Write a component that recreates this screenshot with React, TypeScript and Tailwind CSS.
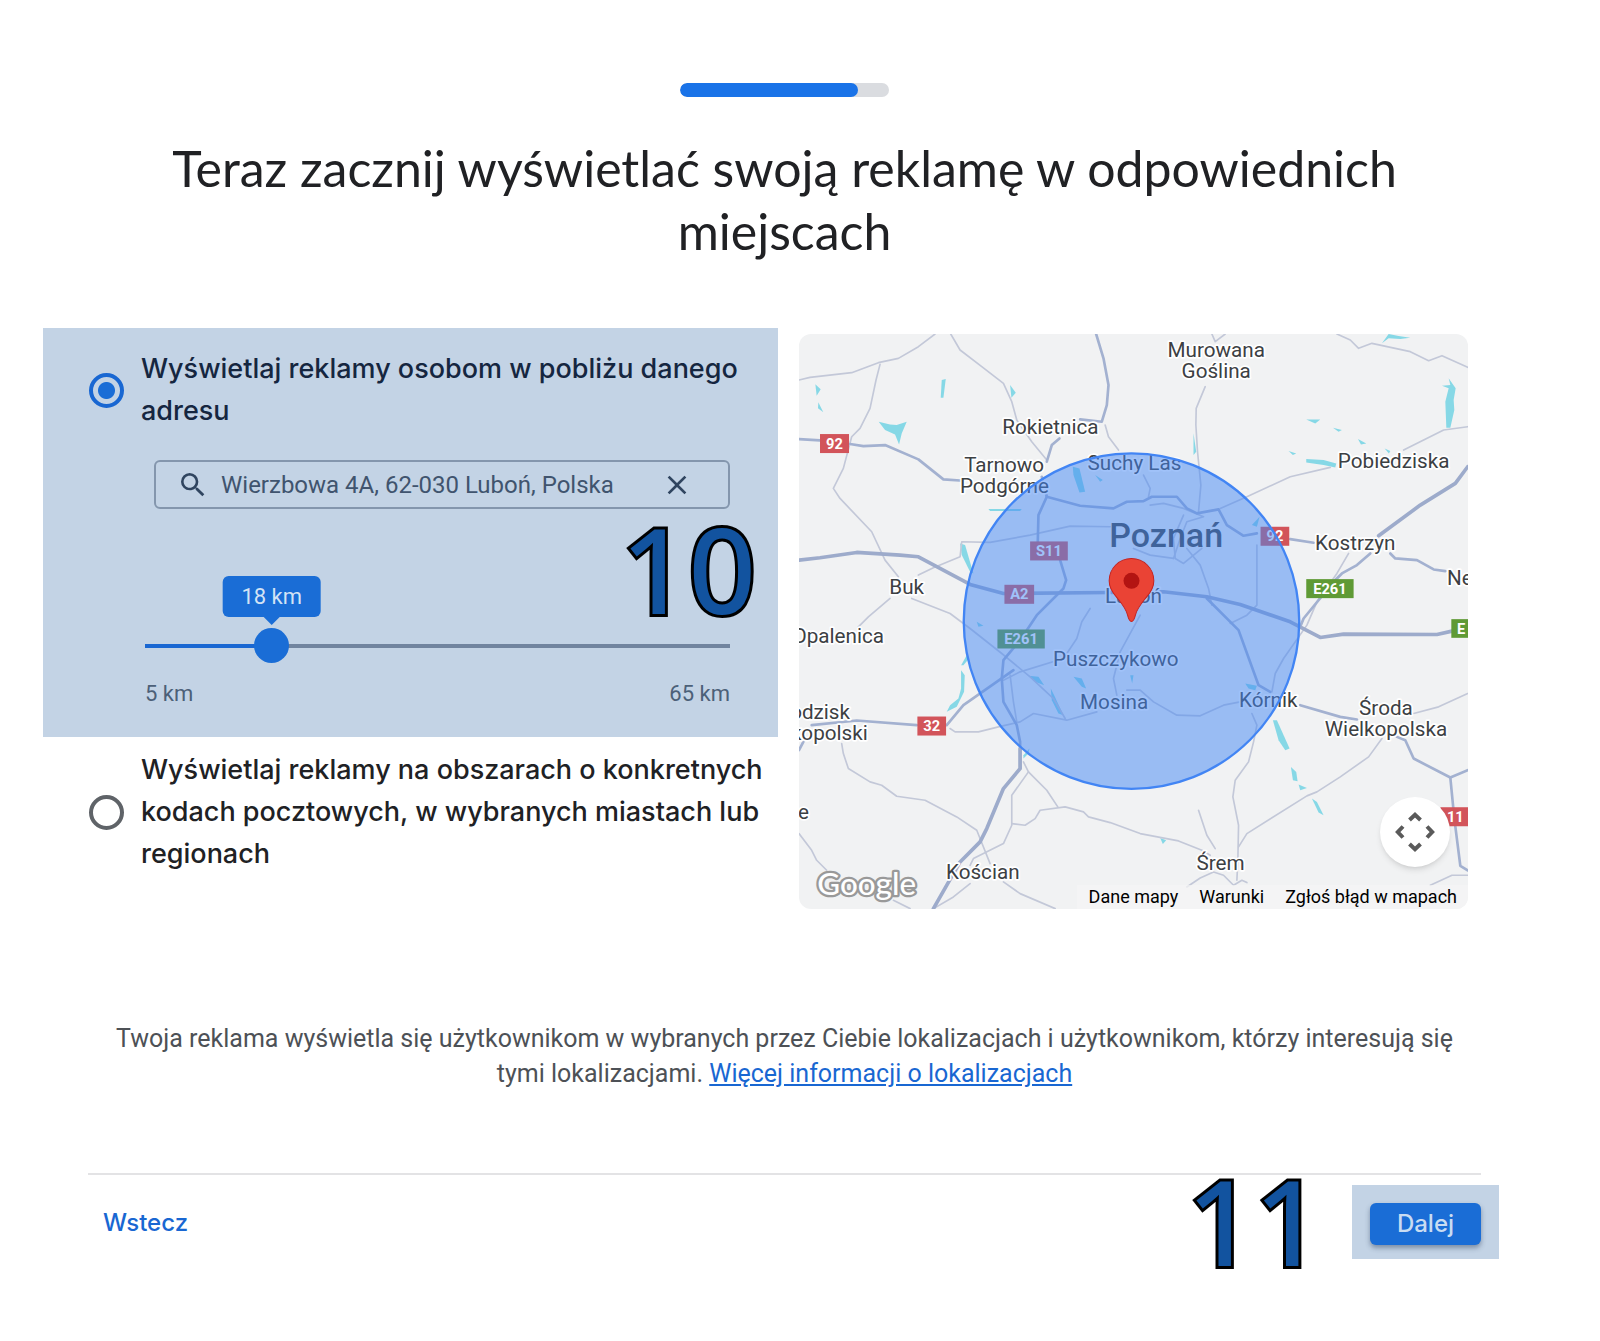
import { useState } from 'react';
import { MdClose, MdSearch } from 'react-icons/md';

const MIN_KM = 5;
const MAX_KM = 65;

const minorRoads = [
  '27,165 60,157 185,143 265,113 325,100 385,65 435,27',
  '270,118 258,165 240,250 210,310 185,335 160,430 130,490 150,520 245,620 285,705 325,755',
  '482,27 510,75 575,125 640,175 665,230 680,285 725,350 770,405',
  '945,300 955,335 985,375',
  '385,750 430,728 510,695 515,650 600,652 720,630 840,603 960,605',
  '365,820 480,865 540,910 635,985 720,1055 790,1120 825,1180',
  '300,820 235,875 205,905',
  '1245,185 1218,250 1217,300 1222,380 1232,480 1225,560',
  '1265,27 1275,50 1305,27',
  '1290,550 1370,515 1500,455 1620,427',
  '1840,375 1900,345 1960,315 2032,305',
  '1640,27 1680,45 1705,70 1745,55 1860,80 1915,107 1955,92 2032,127',
  '1675,685 1640,745 1580,830 1550,900 1480,1000 1455,1045 1445,1100',
  '480,1210 495,1220 565,1220 625,1205 690,1190 730,1165 830,1185 920,1160',
  '155,1255 160,1285 175,1330 240,1370 275,1380 320,1413 405,1425 500,1475 560,1515 600,1615',
  '27,1525 65,1575 80,1605 110,1635',
  '700,1310 715,1340 665,1410 665,1500 640,1555 550,1600 540,1620',
  '715,1340 770,1395 803,1445',
  '665,1495 705,1500 735,1480 750,1455 825,1445 880,1460 895,1475 960,1492 1050,1525 1165,1547 1235,1575 1260,1590',
  '640,1670 690,1705 795,1750',
  '540,1675 490,1715 430,1750',
  '310,1725 360,1750',
  '1775,1240 1735,1295 1650,1355 1580,1400 1550,1412 1370,1525 1345,1565',
  '1385,1165 1400,1200 1390,1250 1375,1310 1335,1365 1328,1415 1345,1500 1343,1600 1340,1665',
  '1870,1165 1945,1145 2032,1105',
  '1225,1455 1250,1530 1275,1570',
  '1190,1685 1230,1658 1270,1640 1300,1650 1330,1680 1355,1665 1370,1672',
  '1920,1680 1985,1650 2032,1650',
  '1010,1095 1050,1095 1090,1130 1160,1170 1230,1172 1300,1140 1350,1130',
  '1400,660 1400,840 1370,870 1320,895',
  '1190,670 1230,720 1255,790 1265,840',
  '1080,540 1120,535 1180,550 1240,575 1190,590 1170,640 1150,700',
  '1180,570 1150,640 1155,700 1180,715 1235,670',
  '1030,670 1080,690 1150,700',
  '900,850 875,890 860,940 820,1000 690,1040 640,1065',
  '1050,870 990,980 970,1060 980,1110',
  '660,1050 670,1130 680,1190',
  '1060,450 1080,490 1075,515',
];

const mainRoads = [
  '27,342 90,346',
  '180,357 220,363 285,360 385,403 460,463 520,467',
  '918,27 940,100 955,180 950,240 935,290 870,283',
  '808,340 785,360 770,410',
  '755,455 770,515 745,570 743,650',
  '810,705 828,765 820,790 740,870 690,945 640,1005 635,1060 640,1130 680,1200 690,1250 690,1330',
  '770,515 870,542 970,550 1010,530 1060,528 1085,515 1160,515 1190,550 1220,565 1285,553 1310,600 1360,632 1400,625',
  '1500,642 1570,653',
  '1740,685 1700,720 1655,745 1630,770 1540,880 1530,905',
  '1800,685 1815,700 1880,705 1930,733 1965,738',
  '65,1200 200,1186 380,1200',
  '470,1200 520,1140 670,1035',
  '27,1275 40,1250',
  '1250,820 1345,915 1405,1080 1440,1100',
  '1530,1140 1650,1175 1700,1183',
  '1820,1235 1845,1245 1870,1300 1980,1357 2032,1335',
  '1980,1357 1992,1480 2010,1622 2032,1635',
];

const motorways = [
  '27,705 90,698 200,682 330,690 385,695 540,778 640,805 960,802 1120,800 1250,815 1350,838 1500,890 1590,937 1660,927 1940,928 1985,918',
  '2032,425 1995,475 1890,540 1765,632',
  '690,1270 690,1330 640,1390 590,1510 570,1550 510,1610 430,1750',
];

const lakes = [
  '76,178 92,193 80,212',
  '85,232 100,262 84,250',
  '455,165 467,162 460,218 452,218',
  '660,180 677,203 664,218',
  '266,290 300,298 320,300 350,290 335,325 327,358 315,328 285,315',
  '848,425 868,430 885,500 868,502 850,450',
  '915,450 938,465 930,470',
  '595,552 695,552 690,558 600,558',
  '510,655 525,660 550,745 540,740 515,690',
  '530,990 537,1000 520,1020 513,1020',
  '513,1035 524,1050 522,1100 500,1145 470,1160 480,1140 505,1120 513,1090',
  '1210,325 1218,380 1210,390',
  '1775,55 1795,27 1825,33 1860,38 1830,42 1795,40',
  '1975,160 1996,190 1990,225 1992,255 1980,308 1968,308 1965,230 1975,190 1955,182 1980,180',
  '1548,283 1590,283 1575,295',
  '1628,308 1655,315 1645,320',
  '1703,342 1728,355 1712,358',
  '1783,370 1800,378 1796,385',
  '1495,378 1518,385 1508,390',
  '1548,402 1600,405 1638,415 1635,427 1600,420 1548,412',
  '1385,600 1408,575 1400,605',
  '1448,1185 1460,1185 1498,1270 1485,1275 1465,1245',
  '1502,1325 1518,1340 1522,1368 1508,1365',
  '1525,1378 1550,1388 1530,1395',
  '1565,1420 1580,1430 1600,1470 1585,1462',
  '1365,1075 1400,1082 1395,1095 1375,1090',
  '715,1052 745,1055 762,1080 735,1070',
  '782,1090 792,1110 820,1170 805,1165 785,1125',
  '850,1055 875,1060 888,1090 875,1085',
  '718,1270 715,1285 700,1300 700,1290',
  '1110,1538 1128,1545 1118,1556',
  '560,890 580,902 565,905',
  '1020,1050 1030,1050 1026,1075',
];

const places = [
  { name: 'Murowana', x: 1278, y: 95 },
  { name: 'Goślina', x: 1278, y: 158 },
  { name: 'Rokietnica', x: 781, y: 327 },
  { name: 'Tarnowo', x: 642, y: 442 },
  { name: 'Podgórne', x: 643, y: 505 },
  { name: 'Suchy Las', x: 1033, y: 434 },
  { name: 'Pobiedziska', x: 1810, y: 428 },
  { name: 'Kostrzyn', x: 1695, y: 675 },
  { name: 'Buk', x: 350, y: 808 },
  { name: 'Luboń', x: 1030, y: 835 },
  { name: 'Puszczykowo', x: 977, y: 1023 },
  { name: 'Mosina', x: 972, y: 1150 },
  { name: 'Kórnik', x: 1434, y: 1145 },
  { name: 'Środa', x: 1787, y: 1168 },
  { name: 'Wielkopolska', x: 1787, y: 1232 },
  { name: 'Kościan', x: 578, y: 1660 },
  { name: 'Śrem', x: 1291, y: 1635 },
];

const clippedPlaces = [
  { name: 'Opalenica', x: 282, y: 954 },
  { name: 'odzisk', x: 180, y: 1180 },
  { name: 'kopolski', x: 233, y: 1245 },
  { name: 'e', x: 57, y: 1480 },
];

const shields = [
  { label: '92', x: 90, y: 327, w: 87, color: '#d2545a' },
  { label: '92', x: 1411, y: 605, w: 86, color: '#d2545a' },
  { label: 'S11', x: 720, y: 649, w: 113, color: '#d2545a' },
  { label: 'A2', x: 643, y: 779, w: 89, color: '#d2545a' },
  { label: '32', x: 382, y: 1174, w: 86, color: '#d2545a' },
  { label: '11', x: 1950, y: 1446, w: 90, color: '#d2545a' },
  { label: 'E261', x: 1548, y: 762, w: 142, color: '#5f9a35' },
  { label: 'E261', x: 622, y: 913, w: 142, color: '#5f9a35' },
];

function CoverageMap() {
  return (
    <svg viewBox="27 27 2006 1724" className="block w-full font-[Roboto,sans-serif]" role="img" aria-label="Poznań">
      <rect x="27" y="27" width="2006" height="1724" fill="#f1f2f3" />
      <g fill="#86d8e6">
        {lakes.map((points) => (
          <polygon key={points} points={points} />
        ))}
      </g>
      <g fill="none" strokeLinejoin="round" strokeLinecap="round">
        <g stroke="#c3c8d8" strokeWidth="5">
          {minorRoads.map((points) => (
            <polyline key={points} points={points} />
          ))}
        </g>
        <g stroke="#a3b1d0" strokeWidth="8">
          {mainRoads.map((points) => (
            <polyline key={points} points={points} />
          ))}
        </g>
        <g stroke="#9dabcb" strokeWidth="11">
          {motorways.map((points) => (
            <polyline key={points} points={points} />
          ))}
        </g>
      </g>

      {/* Road shields */}
      {shields.map((s) => (
        <g key={`${s.label}-${s.x}`}>
          <rect x={s.x} y={s.y} width={s.w} height="57" fill={s.color} />
          <text x={s.x + s.w / 2} y={s.y + 44} textAnchor="middle" fontSize="44" fontWeight="700" fill="#fff">
            {s.label}
          </text>
        </g>
      ))}
      <rect x="1983" y="882" width="60" height="56" fill="#5f9a35" />
      <text x="2000" y="926" fontSize="44" fontWeight="700" fill="#fff">E</text>

      {/* Place names */}
      <g fontSize="62" fill="#3c4043" stroke="#fff" strokeWidth="10" strokeLinejoin="round" paintOrder="stroke">
        {places.map((p) => (
          <text key={p.name} x={p.x} y={p.y} textAnchor="middle">{p.name}</text>
        ))}
        {clippedPlaces.map((p) => (
          <text key={p.name} x={p.x} y={p.y} textAnchor="end">{p.name}</text>
        ))}
        <text x="1970" y="780">Ne</text>
        <text x="1128" y="665" textAnchor="middle" fontSize="102" fontWeight="500" stroke="none">Poznań</text>
      </g>

      <circle cx="1024" cy="888" r="503" fill="#4285f4" fillOpacity="0.5" stroke="#4285f4" strokeWidth="7" />

      {/* Pin */}
      <path
        d="M1024 889c-6 0-9-8-12-20-6-22-20-37-33-53-13-15-22-28-22-49a67 67 0 0 1 134 0c0 21-9 34-22 49-13 16-27 31-33 53-3 12-6 20-12 20z"
        fill="#ea4335"
        stroke="#c5221f"
        strokeWidth="3"
      />
      <circle cx="1024" cy="767" r="24" fill="#b31412" />

      <text
        x="230"
        y="1708"
        textAnchor="middle"
        fontSize="94"
        fontFamily="Lato, sans-serif"
        fontWeight="500"
        fill="#fff"
        stroke="#999"
        strokeWidth="14"
        strokeLinejoin="round"
        paintOrder="stroke"
      >
        Google
      </text>
    </svg>
  );
}

function StepMarker({ children }: { children: string }) {
  return (
    <span className="font-['Noto_Sans',sans-serif] text-[118px] leading-[92px] font-medium text-[#12539f] [stroke-linejoin:round] [-webkit-text-stroke:6px_#000] [paint-order:stroke]">
      {children}
    </span>
  );
}

export default function App() {
  const [target, setTarget] = useState('address');
  const [address, setAddress] = useState('Wierzbowa 4A, 62-030 Luboń, Polska');
  const [radius, setRadius] = useState(18);
  const percent = ((radius - MIN_KM) / (MAX_KM - MIN_KM)) * 100;

  return (
    <main className="min-h-screen bg-white pt-[83px] pr-[119px] pb-20 pl-[88px] font-[Roboto,sans-serif] text-[#202124]">
      {/* Progress */}
      <div className="mx-auto h-[14px] w-[209px] overflow-hidden rounded-full bg-[#dadce0]">
        <div className="h-full w-[85%] rounded-full bg-[#1a73e8]" />
      </div>

      <h1 className="mt-10 px-16 text-center font-[Lato,sans-serif] text-[50px] leading-[63px]">
        Teraz zacznij wyświetlać swoją reklamę w odpowiednich miejscach
      </h1>

      <div className="mt-[65px] -ml-[45px] flex items-start gap-[21px] pr-[13px]">
        <div className="flex-[735]">
          {/* Address targeting */}
          <section className="relative bg-[#c3d3e5] pt-5 pr-4 pb-7 pl-[46px]">
            <div className="flex items-center gap-[17px]">
              <input
                id="target-address"
                type="radio"
                name="target"
                checked={target === 'address'}
                onChange={() => setTarget('address')}
                className="h-[35px] w-[35px] shrink-0 appearance-none rounded-full border-4 border-[#5f6368] checked:border-[#1967d2] checked:bg-[radial-gradient(circle,#1a6dd6_8px,transparent_9px)]"
              />
              <label
                htmlFor="target-address"
                className="font-[Inter,sans-serif] text-[27px] leading-[42px] font-medium text-[#152640]"
              >
                Wyświetlaj reklamy osobom w pobliżu danego adresu
              </label>
            </div>

            <div className="mt-7 mr-8 ml-[65px] flex h-[49px] items-center rounded-md border-2 border-[#8496ad] pl-[21px] text-[#304560]">
              <MdSearch className="h-8 w-8 shrink-0 stroke-current" />
              <input
                type="text"
                aria-label="Adres"
                value={address}
                onChange={(e) => setAddress(e.target.value)}
                className="ml-3 w-full min-w-0 bg-transparent text-[24px] text-[#40546e] outline-none"
              />
              <button type="button" aria-label="Wyczyść" className="mr-[35px] shrink-0" onClick={() => setAddress('')}>
                <MdClose className="h-8 w-8" />
              </button>
            </div>

            <div className="mt-[119px] mr-8 ml-14">
              <div className="relative flex h-[35px] items-center">
                <div className="h-1 w-full bg-[#71849f]">
                  <div className="h-full bg-[#1967d2]" style={{ width: `${percent}%` }} />
                </div>
                <input
                  type="range"
                  aria-label="Promień"
                  min={MIN_KM}
                  max={MAX_KM}
                  value={radius}
                  onChange={(e) => setRadius(Number(e.target.value))}
                  className="absolute top-0 -left-[18px] h-[35px] w-[calc(100%+34px)] appearance-none bg-transparent [&::-webkit-slider-thumb]:h-[35px] [&::-webkit-slider-thumb]:w-[35px] [&::-webkit-slider-thumb]:appearance-none [&::-webkit-slider-thumb]:rounded-full [&::-webkit-slider-thumb]:bg-[#1a6dd6]"
                />
                <output
                  className="absolute bottom-[46px] -translate-x-1/2 rounded-md bg-[#1a6dd6] px-[19px] text-[22px] leading-[41px] whitespace-nowrap text-[#d3e3f5] after:absolute after:top-full after:left-1/2 after:-translate-x-1/2 after:border-x-8 after:border-t-8 after:border-x-transparent after:border-t-[#1a6dd6]"
                  style={{ left: `${percent}%` }}
                >
                  {radius} km
                </output>
              </div>
              <div className="mt-4 flex justify-between text-[22px] leading-[30px] text-[#4c6078]">
                <span>{MIN_KM} km</span>
                <span>{MAX_KM} km</span>
              </div>
            </div>

            <div className="absolute right-[22px] bottom-[122px] flex">
              <StepMarker>10</StepMarker>
            </div>
          </section>

          {/* Region targeting */}
          <div className="mt-3 flex items-center gap-[17px] pl-[46px]">
            <input
              id="target-region"
              type="radio"
              name="target"
              checked={target === 'region'}
              onChange={() => setTarget('region')}
              className="h-[35px] w-[35px] shrink-0 appearance-none rounded-full border-4 border-[#5f6368] checked:border-[#1967d2] checked:bg-[radial-gradient(circle,#1a6dd6_8px,transparent_9px)]"
            />
            <label htmlFor="target-region" className="font-[Inter,sans-serif] text-[27px] leading-[42px] font-medium">
              Wyświetlaj reklamy na obszarach o konkretnych kodach pocztowych, w wybranych miastach lub regionach
            </label>
          </div>
        </div>

        {/* Map */}
        <div className="relative mt-[6px] flex-[669] overflow-hidden rounded-xl">
          <CoverageMap />
          <button
            type="button"
            aria-label="Sterowanie kamerą"
            className="absolute right-[18px] bottom-[42px] flex h-[70px] w-[70px] items-center justify-center rounded-full bg-white shadow-md"
          >
            <svg viewBox="0 0 40 40" className="h-10 w-10" fill="none" stroke="#5a5a5a" strokeWidth="4">
              <path d="M14.5 8 20 2.8 25.500 8M14.500 32l5.500 5.200 5.500-5.200M8 14.500 2.800 20 8 25.500M32 14.500l5.200 5.500-5.200 5.500" />
            </svg>
          </button>
          <div className="absolute right-0 bottom-0 flex gap-[21px] bg-[#f5f5f5]/70 pr-[11px] pl-3 text-[18px] leading-6 text-black">
            <a href="#dane">Dane mapy</a>
            <a href="#warunki">Warunki</a>
            <a href="#zglos">Zgłoś błąd w mapach</a>
          </div>
        </div>
      </div>

      <p className="mt-28 px-6 text-center text-[25px] leading-[35px] text-[#4d5156]">
        Twoja reklama wyświetla się użytkownikom w wybranych przez Ciebie lokalizacjach i użytkownikom, którzy interesują się
        tymi lokalizacjami.{' '}
        <a href="#lokalizacje" className="text-[#1967d2] underline">
          Więcej informacji o lokalizacjach
        </a>
      </p>

      {/* Footer */}
      <footer className="mt-[82px] -mr-[18px]">
        <hr className="mr-[18px] border-t-2 border-[#e3e3e5]" />
        <div className="flex items-start">
          <button type="button" className="mt-[30px] ml-[15px] font-[Inter,sans-serif] text-[24px] leading-9 font-medium text-[#1967d2]">
            Wstecz
          </button>
          <div className="mr-[30px] ml-auto flex">
            <StepMarker>11</StepMarker>
          </div>
          <div className="mt-[10px] bg-[#c3d3e5] px-[18px] pt-[18px] pb-[14px]">
            <button
              type="button"
              className="block h-[42px] w-[111px] rounded-md bg-[#1a6dd6] font-[Inter,sans-serif] text-[24px] leading-[42px] font-medium text-[#c9dcf2] shadow-[0_3px_5px_rgba(40,60,90,0.45)]"
            >
              Dalej
            </button>
          </div>
        </div>
      </footer>
    </main>
  );
}
